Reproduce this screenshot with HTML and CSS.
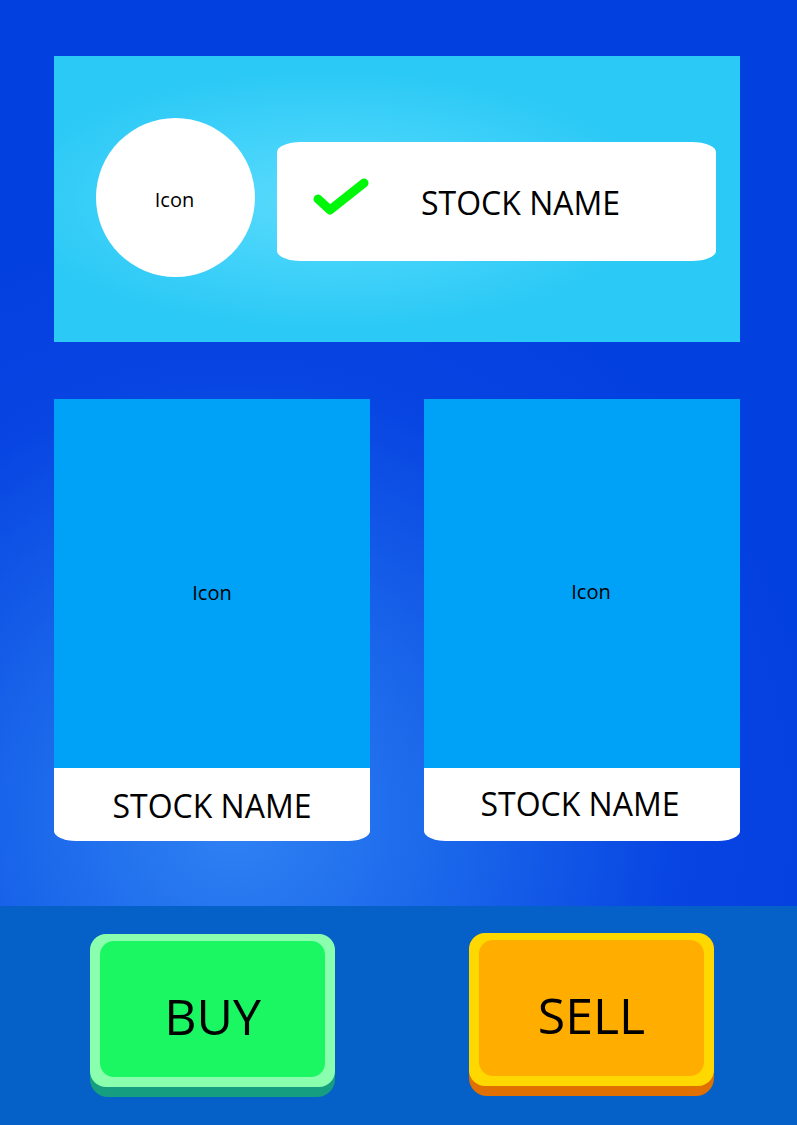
FILE: index.html
```html
<!DOCTYPE html>
<html>
<head>
<meta charset="utf-8">
<link rel="stylesheet" href="styles.css">
</head>
<body>
<div class="screen">
  <main class="content">
    <section class="hero">
      <div class="avatar">Icon</div>
      <div class="pill">
        <svg class="check" width="60" height="40" viewBox="0 0 60 40">
          <path d="M5 21 L17 32 L51 5" fill="none" stroke="#00f70a" stroke-width="9" stroke-linecap="round" stroke-linejoin="round"/>
        </svg>
        <span class="pill-name">STOCK NAME</span>
      </div>
    </section>
    <section class="cards">
      <div class="card">
        <div class="card-icon">Icon</div>
        <div class="card-name">STOCK NAME</div>
      </div>
      <div class="card">
        <div class="card-icon card-icon-alt">Icon</div>
        <div class="card-name card-name-alt">STOCK NAME</div>
      </div>
    </section>
  </main>
  <footer class="actions">
    <button class="btn btn-buy"><span class="btn-rim"><span class="btn-face">BUY</span></span></button>
    <button class="btn btn-sell"><span class="btn-rim"><span class="btn-face">SELL</span></span></button>
  </footer>
</div>
</body>
</html>
```

FILE: styles.css
```css
* { box-sizing: border-box; }
html, body { margin: 0; padding: 0; }
body {
  width: 797px;
  height: 1125px;
  overflow: hidden;
  font-family: "Open Sans", "Noto Sans", sans-serif;
  color: #000;
}
.screen {
  width: 797px;
  height: 1125px;
  display: flex;
  flex-direction: column;
  background: radial-gradient(circle at 235px 820px, #2f82f3 0, #1a66ea 220px, #0744e2 450px, #0340e0 600px);
}
.content {
  height: 906px;
  padding: 56px 57px 0 54px;
  display: flex;
  flex-direction: column;
  gap: 57px;
}
.hero {
  height: 286px;
  display: flex;
  align-items: flex-start;
  padding-left: 42px;
  background: radial-gradient(ellipse 330px 130px at 276px 144px, #5cdafc 0, #47d4fa 40%, #2bc9f6 100%);
}
.avatar {
  width: 159px;
  height: 159px;
  margin-top: 62px;
  border-radius: 50%;
  background: #fff;
  display: flex;
  align-items: center;
  justify-content: center;
  font-size: 20px;
  padding-top: 4px;
  padding-right: 2px;
}
.pill {
  margin-left: 22px;
  margin-top: 86px;
  width: 439px;
  height: 119px;
  background: #fff;
  border-radius: 24px / 10px;
  display: flex;
  align-items: center;
  padding-left: 36px;
}
.check { display: block; margin-top: -8px; }
.pill-name {
  margin-left: 48px;
  font-size: 32px;
  margin-top: 2px;
}
.cards {
  display: flex;
  gap: 54px;
}
.card {
  width: 316px;
  height: 442px;
  display: flex;
  flex-direction: column;
}
.card-icon {
  height: 369px;
  background: #00a2f8;
  display: flex;
  align-items: center;
  justify-content: center;
  font-size: 20px;
  padding-top: 17px;
}
.card-icon-alt { padding-top: 15px; padding-left: 18px; }
.card-name {
  flex: 1;
  background: #fff;
  border-radius: 0 0 22px 22px / 0 0 10px 10px;
  display: flex;
  align-items: center;
  justify-content: center;
  font-size: 32px;
  padding-top: 2px;
}
.card-name-alt { padding-top: 0; padding-bottom: 2px; padding-right: 4px; }
.actions {
  flex: 1;
  background: #0560c8;
  display: flex;
  align-items: flex-start;
  padding: 28px 0 0 90px;
  gap: 134px;
}
.btn {
  border: 0;
  padding: 0 0 10px 0;
  margin: 0;
  width: 245px;
  border-radius: 18px;
  font: inherit;
  display: block;
  cursor: pointer;
}
.btn-rim {
  display: block;
  padding: 7px 10px 10px;
  border-radius: 16px;
}
.btn-face {
  display: flex;
  align-items: center;
  justify-content: center;
  height: 136px;
  border-radius: 14px;
  font-size: 50px;
  padding-top: 14px;
  color: #000;
}
.btn-buy { background: #169e80; }
.btn-buy .btn-rim { background: #8affad; }
.btn-buy .btn-face { background: #1bf763; }
.btn-sell { background: #e07000; margin-top: -1px; }
.btn-sell .btn-rim { background: #ffd800; }
.btn-sell .btn-face { background: #ffae00; }
```
